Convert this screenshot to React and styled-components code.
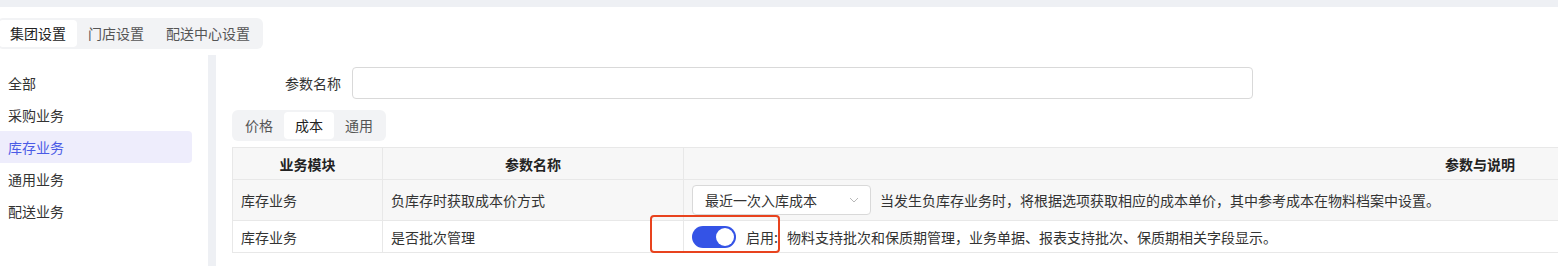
import React, { useState } from 'react';
import styled, { createGlobalStyle } from 'styled-components';

const GlobalStyle = createGlobalStyle`
  body {
    margin: 0;
    background: #fff;
    font-family: "Noto Sans CJK SC", "Noto Sans", sans-serif;
    font-size: 14px;
    color: #333;
    overflow: hidden;
  }
`;

const TopStrip = styled.div`
  height: 7px;
  background: #eef0f4;
`;

const Segmented = styled.div`
  display: inline-flex;
  padding: 2px;
  background: #f2f3f5;
  border-radius: 6px;
`;

const Seg = styled.div`
  height: 27px;
  line-height: 27px;
  padding: 0 ${p => p.$pad}px;
  border-radius: 4px;
  color: ${p => (p.$active ? '#222' : '#555')};
  background: ${p => (p.$active ? '#fff' : 'transparent')};
  cursor: pointer;
`;

const TopTabs = styled.div`
  margin-top: 11px;
  margin-left: -3px;
`;

const Main = styled.div`
  display: flex;
  margin-top: 6px;
  height: 211px;
`;

const Sidebar = styled.div`
  width: 208px;
  padding-top: 12px;
  box-sizing: border-box;
`;

const MenuItem = styled.div`
  width: 192px;
  height: 32px;
  line-height: 32px;
  padding-left: 8px;
  box-sizing: border-box;
  border-radius: 0 4px 4px 0;
  color: ${p => (p.$active ? '#4b5be6' : '#333')};
  background: ${p => (p.$active ? '#eeedfc' : 'transparent')};
`;

const Divider = styled.div`
  width: 8px;
  background: #eef0f4;
`;

const Content = styled.div`
  flex: 1;
  padding: 12px 0 0 16px;
  overflow: hidden;
`;

const SearchRow = styled.div`
  display: flex;
  align-items: center;
  gap: 11px;
`;

const Label = styled.label`
  width: 109px;
  text-align: right;
`;

const Input = styled.input`
  width: 901px;
  height: 32px;
  box-sizing: border-box;
  border: 1px solid #d9d9d9;
  border-radius: 4px;
  outline: none;
`;

const InnerTabs = styled.div`
  margin-top: 11px;
`;

const TableWrap = styled.div`
  position: relative;
  margin-top: 6px;
`;

const Table = styled.table`
  width: 2045px;
  border-collapse: collapse;
  table-layout: fixed;
`;

const Th = styled.th`
  height: 31px;
  padding: 0 8px;
  background: #f7f7f7;
  border: 1px solid #e8e8e8;
  font-weight: 600;
  color: #222;
  text-align: center;
`;

const Td = styled.td`
  height: ${p => p.$h}px;
  padding: 0 8px;
  border: 1px solid #e8e8e8;
  background: ${p => (p.$shade ? '#f7f7f7' : '#fff')};
  box-sizing: border-box;
`;

const Inline = styled.div`
  display: flex;
  align-items: center;
`;

const Select = styled.div`
  width: 179px;
  height: 30px;
  box-sizing: border-box;
  border: 1px solid #d9d9d9;
  border-radius: 4px;
  background: #fff;
  display: flex;
  align-items: center;
  justify-content: space-between;
  padding: 0 10px 0 12px;
  margin-right: 9px;
`;

const Switch = styled.button`
  width: 44px;
  height: 22px;
  border: none;
  padding: 0;
  border-radius: 11px;
  background: ${p => (p.$on ? '#3453e6' : '#c0c4cc')};
  position: relative;
  margin-right: 10px;
  cursor: pointer;
  &::after {
    content: '';
    position: absolute;
    top: 2px;
    left: ${p => (p.$on ? '24px' : '2px')};
    width: 18px;
    height: 18px;
    border-radius: 50%;
    background: #fff;
  }
`;

const SwitchLabel = styled.span`
  margin-right: 9px;
`;

const Highlight = styled.div`
  position: absolute;
  left: 418px;
  top: 68px;
  width: 130px;
  height: 38px;
  box-sizing: border-box;
  border: 2px solid #e8431e;
  border-radius: 4px;
  pointer-events: none;
`;

const Chevron = () => (
  <svg width="12" height="12" viewBox="0 0 12 12" fill="none">
    <path d="M2 4l4 4 4-4" stroke="#b8b8b8" strokeWidth="1" />
  </svg>
);

export default function App() {
  const [group, setGroup] = useState(0);
  const [menu, setMenu] = useState(2);
  const [sub, setSub] = useState(1);
  const [batch, setBatch] = useState(true);

  const groups = ['集团设置', '门店设置', '配送中心设置'];
  const menus = ['全部', '采购业务', '库存业务', '通用业务', '配送业务'];
  const subs = ['价格', '成本', '通用'];

  return (
    <>
      <GlobalStyle />
      <TopStrip />
      <TopTabs>
        <Segmented>
          {groups.map((g, i) => (
            <Seg key={g} $pad={11} $active={group === i} onClick={() => setGroup(i)}>{g}</Seg>
          ))}
        </Segmented>
      </TopTabs>
      <Main>
        <Sidebar>
          {menus.map((m, i) => (
            <MenuItem key={m} $active={menu === i} onClick={() => setMenu(i)}>{m}</MenuItem>
          ))}
        </Sidebar>
        <Divider />
        <Content>
          <SearchRow>
            <Label>参数名称</Label>
            <Input />
          </SearchRow>
          <InnerTabs>
            <Segmented>
              {subs.map((s, i) => (
                <Seg key={s} $pad={11} $active={sub === i} onClick={() => setSub(i)}>{s}</Seg>
              ))}
            </Segmented>
          </InnerTabs>
          <TableWrap>
            <Table>
              <colgroup>
                <col style={{ width: 150 }} />
                <col style={{ width: 301 }} />
                <col />
              </colgroup>
              <thead>
                <tr>
                  <Th>业务模块</Th>
                  <Th>参数名称</Th>
                  <Th>参数与说明</Th>
                </tr>
              </thead>
              <tbody>
                <tr>
                  <Td $h={41} $shade>库存业务</Td>
                  <Td $h={41} $shade>负库存时获取成本价方式</Td>
                  <Td $h={41} $shade>
                    <Inline>
                      <Select>
                        <span>最近一次入库成本</span>
                        <Chevron />
                      </Select>
                      当发生负库存业务时，将根据选项获取相应的成本单价，其中参考成本在物料档案中设置。
                    </Inline>
                  </Td>
                </tr>
                <tr>
                  <Td $h={32}>库存业务</Td>
                  <Td $h={32}>是否批次管理</Td>
                  <Td $h={32}>
                    <Inline>
                      <Switch $on={batch} onClick={() => setBatch(!batch)} />
                      <SwitchLabel>启用:</SwitchLabel>
                      物料支持批次和保质期管理，业务单据、报表支持批次、保质期相关字段显示。
                    </Inline>
                  </Td>
                </tr>
              </tbody>
            </Table>
            <Highlight />
          </TableWrap>
        </Content>
      </Main>
    </>
  );
}
